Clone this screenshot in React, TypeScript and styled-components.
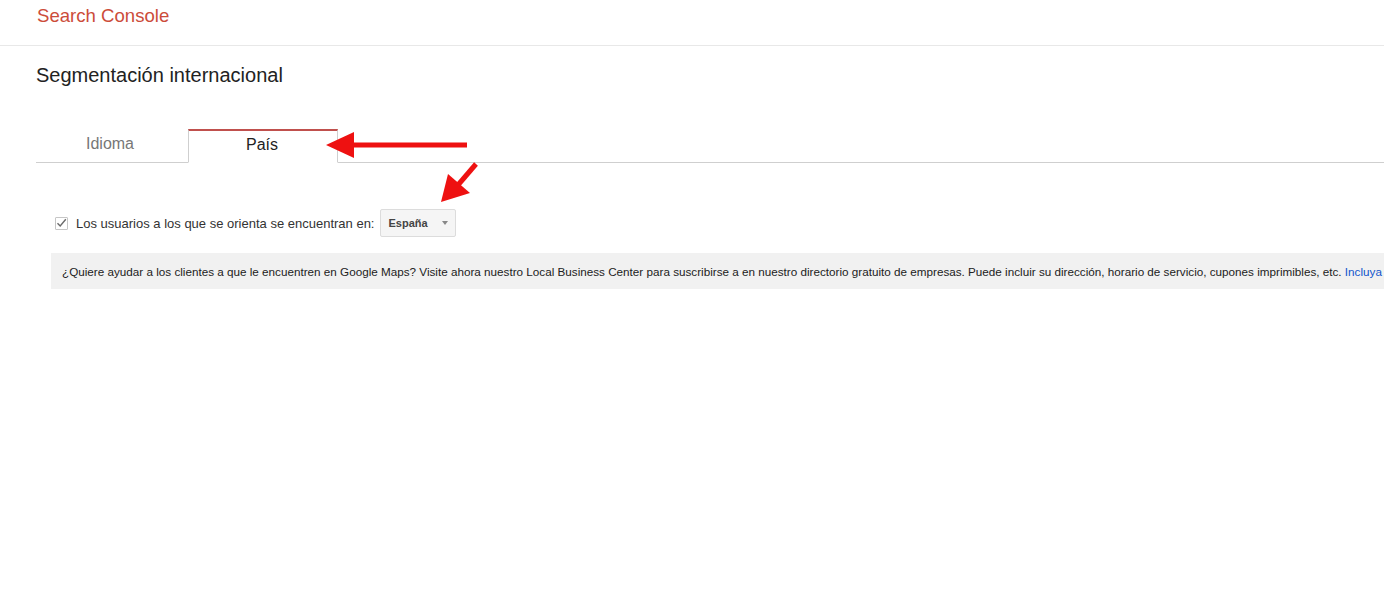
import React from "react";
import styled, { createGlobalStyle } from "styled-components";

const Global = createGlobalStyle`
  html, body { margin: 0; padding: 0; background: #fff; overflow: hidden; }
  body { font-family: "Liberation Sans", Arial, sans-serif; }
`;

const Page = styled.div`
  position: relative;
  width: 1384px;
  height: 596px;
  overflow: hidden;
`;

const Header = styled.header`
  height: 46px;
  box-sizing: border-box;
  border-bottom: 1px solid #e8e8e8;
  padding: 5px 0 0 37px;
`;

const Brand = styled.div`
  font-size: 18.6px;
  line-height: 22px;
  color: #cc4c3a;
`;

const Main = styled.main`
  padding: 17px 0 0 36px;
`;

const Title = styled.h1`
  margin: 0;
  font-size: 20px;
  font-weight: normal;
  line-height: 24px;
  color: #222;
`;

const Tabs = styled.div`
  display: flex;
  margin-top: 42px;
  border-bottom: 1px solid #cfcfcf;
  height: 33px;
`;

const Tab = styled.div<{ $active?: boolean }>`
  width: 152px;
  box-sizing: border-box;
  display: flex;
  align-items: center;
  justify-content: center;
  padding-bottom: 4px;
  padding-right: 4px;
  font-size: 16px;
  color: ${(p) => (p.$active ? "#222" : "#777")};
  background: #fff;
  ${(p) =>
    p.$active
      ? `border: 1px solid #cfcfcf; border-top: 2px solid #c0504d; border-bottom: 1px solid #fff; margin-bottom: -1px; height: 34px; width: 150px; padding-right: 2px;`
      : ``}
`;

const Row = styled.div`
  display: flex;
  align-items: center;
  margin: 46px 0 0 19px;
  height: 28px;
  font-size: 13px;
  color: #333;
`;

const Check = styled.span`
  width: 13px;
  height: 13px;
  box-sizing: border-box;
  border: 1px solid #c6c6c6;
  border-radius: 1px;
  background: #fff;
  display: inline-flex;
  align-items: center;
  justify-content: center;
  margin-right: 8px;
`;

const Select = styled.div`
  margin-left: 6px;
  height: 28px;
  width: 76px;
  box-sizing: border-box;
  border: 1px solid #dcdcdc;
  border-radius: 2px;
  background: #f5f5f5;
  display: flex;
  align-items: center;
  padding-left: 7px;
  font-size: 11px;
  font-weight: bold;
  color: #444;
`;

const Caret = styled.span`
  margin-left: auto;
  margin-right: 7px;
  width: 0;
  height: 0;
  border-left: 3.5px solid transparent;
  border-right: 3.5px solid transparent;
  border-top: 4px solid #888;
`;

const Info = styled.div`
  margin: 16px 0 0 15px;
  height: 36px;
  background: #f1f1f1;
  display: flex;
  align-items: center;
  padding-left: 11px;
  font-size: 11.7px;
  color: #222;
  white-space: pre;
  overflow: hidden;
`;

const Link = styled.a`
  color: #1155cc;
  text-decoration: none;
`;

const Overlay = styled.svg`
  position: absolute;
  left: 0;
  top: 0;
  pointer-events: none;
`;

export default function App() {
  return (
    <Page>
      <Global />
      <Header>
        <Brand>Search Console</Brand>
      </Header>
      <Main>
        <Title>Segmentación internacional</Title>
        <Tabs>
          <Tab>Idioma</Tab>
          <Tab $active>País</Tab>
        </Tabs>
        <Row>
          <Check>
            <svg width="11" height="10" viewBox="0 0 11 10">
              <path d="M1.5 5.2 L4.2 8 L9.8 1.2" fill="none" stroke="#6b6b6b" strokeWidth="1.4" />
            </svg>
          </Check>
          Los usuarios a los que se orienta se encuentran en:
          <Select>
            España
            <Caret />
          </Select>
        </Row>
        <Info>
          {"¿Quiere ayudar a los clientes a que le encuentren en Google Maps? Visite ahora nuestro Local Business Center para suscribirse a en nuestro directorio gratuito de empresas. Puede incluir su dirección, horario de servicio, cupones imprimibles, etc. "}
          <Link href="#">Incluya su empresa</Link>
        </Info>
      </Main>
      <Overlay width="1384" height="596" viewBox="0 0 1384 596">
        <line x1="467" y1="145" x2="350" y2="145" stroke="#ee1111" strokeWidth="5" />
        <polygon points="326,145 354,132 354,158" fill="#ee1111" />
        <line x1="476" y1="164" x2="458" y2="185" stroke="#ee1111" strokeWidth="5" />
        <polygon points="441,202 448,174 470,193" fill="#ee1111" />
      </Overlay>
    </Page>
  );
}
